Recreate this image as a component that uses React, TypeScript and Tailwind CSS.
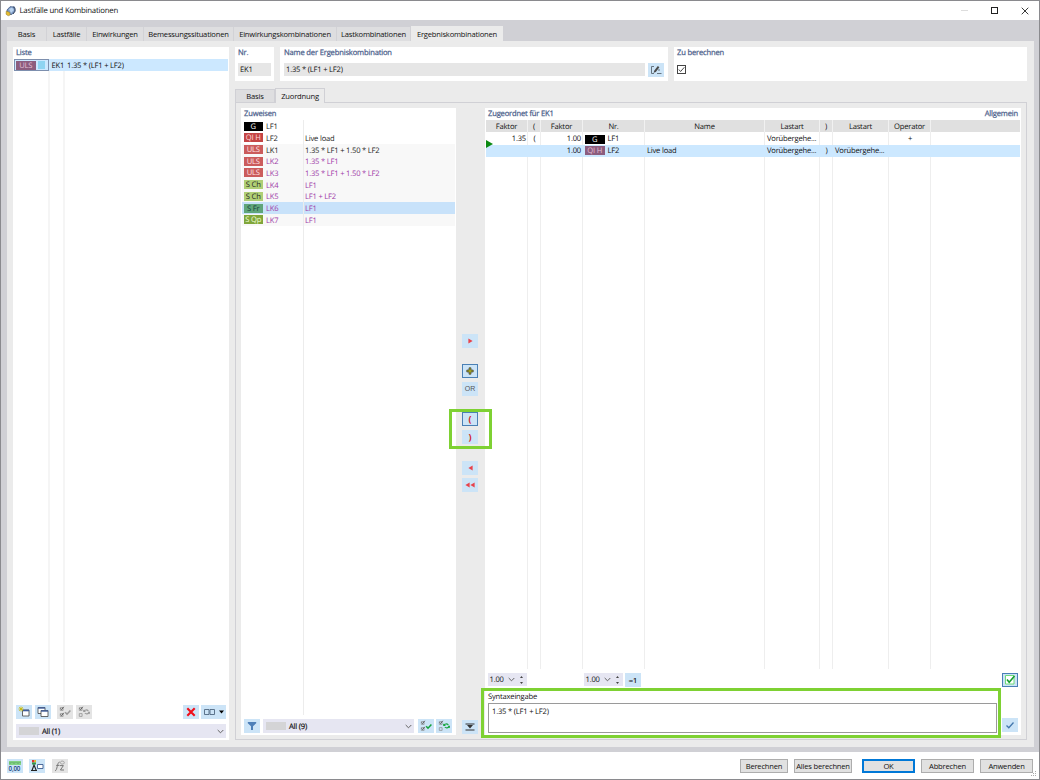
import React from 'react';
import clsx from 'clsx';

interface Assignment {
  badge: string;
  badgeClass: string;
  no: string;
  name: string;
  derived?: boolean;
  selected?: boolean;
}

const TABS = [
  { label: 'Basis', width: 'w-[40px]' },
  { label: 'Lastfälle', width: 'w-[40px]' },
  { label: 'Einwirkungen', width: 'w-[57px]' },
  { label: 'Bemessungssituationen', width: 'w-[90px]' },
  { label: 'Einwirkungskombinationen', width: 'w-[103px]' },
  { label: 'Lastkombinationen', width: 'w-[74px]' }
];

const ULS = 'bg-[#cb5c5c] text-[#ffe4e4]';
const S_CH = 'bg-[#b0cf76] text-[#222]';

const ASSIGNMENTS: Assignment[] = [
  { badge: 'G', badgeClass: 'bg-black text-white', no: 'LF1', name: '' },
  { badge: 'QI H', badgeClass: 'bg-[#c44646] text-[#ffd9d9]', no: 'LF2', name: 'Live load' },
  { badge: 'ULS', badgeClass: ULS, no: 'LK1', name: '1.35 * LF1 + 1.50 * LF2' },
  { badge: 'ULS', badgeClass: ULS, no: 'LK2', name: '1.35 * LF1', derived: true },
  { badge: 'ULS', badgeClass: ULS, no: 'LK3', name: '1.35 * LF1 + 1.50 * LF2', derived: true },
  { badge: 'S Ch', badgeClass: S_CH, no: 'LK4', name: 'LF1', derived: true },
  { badge: 'S Ch', badgeClass: S_CH, no: 'LK5', name: 'LF1 + LF2', derived: true },
  { badge: 'S Fr', badgeClass: 'bg-[#5fa57a] text-[#173f3c]', no: 'LK6', name: 'LF1', derived: true, selected: true },
  { badge: 'S Qp', badgeClass: 'bg-[#80a63b] text-[#f2ffd8]', no: 'LK7', name: 'LF1', derived: true }
];

const GRID = 'grid grid-cols-[42px_13px_42px_62px_120px_55px_13px_56px_42px_1fr]';

const HEADERS = ['Faktor', '(', 'Faktor', 'Nr.', 'Name', 'Lastart', ')', 'Lastart', 'Operator', ''];

const Panel: React.FC<{ className?: string; children?: React.ReactNode }> = ({ className, children }) => (
  <section className={clsx('shrink-0 bg-white', className)}>{children}</section>
);

const Title: React.FC<{ children: React.ReactNode }> = ({ children }) => (
  <h2 className="h-[12px] pl-[3px] leading-[13px] tracking-[-0.17px] text-[#4d5f8c] [-webkit-text-stroke:0.25px_#4d5f8c]">{children}</h2>
);

const IconButton: React.FC<{
  className?: string;
  variant?: 'normal' | 'disabled' | 'active';
  children: React.ReactNode;
}> = ({ className, variant = 'normal', children }) => (
  <button
    type="button"
    className={clsx(
      'flex h-[14px] w-[16px] shrink-0 items-center justify-center',
      variant === 'disabled' ? 'bg-[#e4e4e4]' : 'bg-[#cce4f7]',
      variant === 'active' && 'border border-[#4a80b5]',
      className
    )}
  >
    {children}
  </button>
);

const Icon: React.FC<{ children: React.ReactNode; w?: number; h?: number }> = ({ children, w = 12, h = 12 }) => (
  <svg width={w} height={h} viewBox={`0 0 ${w} ${h}`} fill="none" className="shrink-0" aria-hidden="true">
    {children}
  </svg>
);

const Chevron = () => (
  <Icon w={7} h={5}>
    <path d="M.7 1l2.8 2.8L6.3 1" stroke="#555" strokeWidth=".9" />
  </Icon>
);

const ChecksIcon: React.FC<{ color: string; invert?: boolean }> = ({ color, invert }) => (
  <Icon>
    <path d="M1.3 1.6h2.8v2.8H1.3zM1.3 7.6h2.8v2.8H1.3z" stroke="#8a8a8a" strokeWidth=".7" />
    <path d="M1.6 2.4l1 1.2L4.8.8" stroke="#555" strokeWidth=".9" />
    {invert ? (
      <>
        <path d="M6 5C7 3.6 9 3.6 10.4 4.8M11.2 6.6C10 8.2 8 8.2 6.8 7.2" stroke={color} strokeWidth="1.1" />
        <path d="M5.2 3.4v2.6H8zM11.9 8.2V5.8H9.4z" fill={color} />
      </>
    ) : (
      <>
        <path d="M1.6 8.4l1 1.2 2.2-2.8" stroke="#555" strokeWidth=".9" />
        <path d="M6.2 6.2l1.8 2 3.4-3.8" stroke={color} strokeWidth="1.5" />
      </>
    )}
  </Icon>
);

const Combo: React.FC<{ label: string; className?: string }> = ({ label, className }) => (
  <div className={clsx('flex h-[14px] items-center bg-[#e6e6f2] pr-[2px] pl-[3px]', className)}>
    <span className="h-[8px] w-[20px] bg-[#d4d4d6]" />
    <span className="ml-[3px] flex-1 pt-px [-webkit-text-stroke:0.2px_#222]">{label}</span>
    <Chevron />
  </div>
);

const Spinner = () => (
  <div className="flex h-[13px] w-[39px] shrink-0 items-center bg-[#e6e6f2] pl-[1.5px]">
    <span className="w-[18px] pt-px">1.00</span>
    <Chevron />
    <span className="ml-[4px]">
      <Icon w={5} h={10}>
        <path d="M1 3l1.5-2L4 3zM1 7l1.5 2L4 7z" fill="#444" />
      </Icon>
    </span>
  </div>
);

const Badge: React.FC<{ className: string; children: React.ReactNode }> = ({ className, children }) => (
  <span className={clsx('block h-[9px] w-[19.5px] shrink-0 text-center leading-[10px]', className)}>{children}</span>
);

const TitleBar = () => (
  <header className="flex h-[19px] shrink-0 items-center bg-white pl-[4px]">
    <Icon>
      <path d="M2 5l3-3.3 4.5.2L10 6 6.8 9.5H2.5z" fill="#7d9ac4" stroke="#344e7c" strokeWidth=".7" />
      <path d="M4 4l3-1.5L9 5 6 8z" fill="#b9d3ef" />
      <path d="M8 1.8l2 1.5v3L8.2 9" stroke="#40506a" strokeWidth="1" />
      <path d="M1.3 6l3.5 1.5.4 2.5-2 .8L1 9.2z" fill="#e6bd31" stroke="#8a742d" strokeWidth=".5" />
    </Icon>
    <h1 className="ml-[2.5px] flex-1 text-[7.8px] tracking-[-0.22px] text-[#111]">Lastfälle und Kombinationen</h1>
    <div className="flex items-center gap-[23px] pr-[10px]">
      <span className="h-px w-[7px] bg-[#ddd]" />
      <span className="size-[7px] border border-[#222]" />
      <Icon w={8} h={8}>
        <path d="M.7.7l6.6 6.6M7.3.7L.7 7.3" stroke="#222" strokeWidth=".9" />
      </Icon>
    </div>
  </header>
);

const MainTabs = () => (
  <nav className="flex h-[15px] shrink-0 items-end">
    {TABS.map((tab) => (
      <button
        key={tab.label}
        type="button"
        className={clsx('h-[14px] shrink-0 border-r border-[#d2d2d6] bg-[#dedee0] text-center leading-[14px]', tab.width)}
      >
        {tab.label}
      </button>
    ))}
    <button type="button" className="h-[15px] w-[92px] bg-[#ebebeb] pt-px text-center leading-[14px]">
      Ergebniskombinationen
    </button>
  </nav>
);

const ListPanel = () => (
  <Panel className="flex h-[693px] w-[216px] flex-col">
    <Title>Liste</Title>
    <div className="mx-px flex h-[12px] shrink-0 items-center bg-[#cce8ff]">
      <span className="flex h-[12px] w-[35px] shrink-0 items-center border border-[#7d8fae] pl-px">
        <Badge className="bg-[#8c5d7e] text-[#e3bfd6]">ULS</Badge>
        <span className="ml-[2px] h-[8px] w-[7px] bg-[#8ed4f2]" />
      </span>
      <span className="ml-[2.5px] w-[15.5px] pt-px">EK1</span>
      <span className="pt-px">1.35 * (LF1 + LF2)</span>
    </div>
    <div className="flex flex-1 pl-[35px]">
      <span className="h-[631px] w-[17px] border-x-2 border-[#f5f5f5]" />
    </div>
    <div className="flex items-center gap-[2.5px] px-[3px]">
      <IconButton>
        <Icon>
          <path d="M4.5 4h6.5v6h-6.5z" fill="#fff" stroke="#444" strokeWidth=".8" />
          <path d="M4.5 4.5h6.5" stroke="#405e9c" strokeWidth="1.6" />
          <path d="M3 .5v5M.5 3h5M1.2 1.2l3.6 3.6M4.8 1.2L1.2 4.8" stroke="#c9b900" strokeWidth=".8" />
        </Icon>
      </IconButton>
      <IconButton>
        <Icon>
          <path d="M1 1.5h7v6H1z" fill="#fff" stroke="#444" strokeWidth=".8" />
          <path d="M1 2h7" stroke="#405e9c" strokeWidth="1.4" />
          <path d="M4 4.5h7v6H4z" fill="#fff" stroke="#444" strokeWidth=".8" />
          <path d="M4 5h7" stroke="#405e9c" strokeWidth="1.4" />
        </Icon>
      </IconButton>
      <IconButton variant="disabled" className="ml-[4px]">
        <ChecksIcon color="#999" />
      </IconButton>
      <IconButton variant="disabled">
        <ChecksIcon color="#999" invert />
      </IconButton>
      <span className="flex-1" />
      <IconButton>
        <Icon w={10} h={10}>
          <path d="M1.3 1.3l7.4 7.4M8.7 1.3L1.3 8.7" stroke="#f00f1a" strokeWidth="2.1" />
        </Icon>
      </IconButton>
      <IconButton className="w-[25px] gap-[4px]">
        <Icon w={11} h={6}>
          <path d="M.5.5h4.5v5H.5zM6 .5h4.5v5H6z" stroke="#4f6680" strokeWidth=".9" />
        </Icon>
        <Icon w={5} h={4}>
          <path d="M0 .5h5L2.5 3.5z" fill="#000" />
        </Icon>
      </IconButton>
    </div>
    <Combo label="All (1)" className="mx-[3px] mt-[5px] mb-[2px]" />
  </Panel>
);

const CombinationHeader = () => (
  <div className="flex h-[34px] shrink-0 gap-[6px]">
    <Panel className="w-[39px]">
      <Title>Nr.</Title>
      <div className="mx-[3px] mt-[4px] h-[13px] bg-[#e6e6e6] pl-[2px] leading-[15px]">EK1</div>
    </Panel>
    <Panel className="w-[388px] pl-px">
      <Title>Name der Ergebniskombination</Title>
      <div className="mt-[4px] flex gap-[3px] pl-[3px]">
        <div className="h-[13px] w-[361px] bg-[#e6e6e6] pl-[2px] leading-[15px]">1.35 * (LF1 + LF2)</div>
        <IconButton>
          <Icon>
            <path d="M4 2.5H1.5v7H4M7 9.5h4.5M9 5v2" stroke="#5a6672" strokeWidth=".9" />
            <path d="M3.6 8.8l.6-2L7.8 2l1.6 1.2-3.6 4.8z" fill="#4a4a4a" />
          </Icon>
        </IconButton>
      </div>
    </Panel>
    <Panel className="w-[353px]">
      <Title>Zu berechnen</Title>
      <span className="mt-[6px] ml-[3px] flex size-[9px] items-center justify-center border border-[#444]">
        <Icon w={7} h={7}>
          <path d="M.8 3.5l1.8 2L6.3 1.3" stroke="#333" strokeWidth=".9" />
        </Icon>
      </span>
    </Panel>
  </div>
);

const AssignPanel = () => (
  <Panel className="flex w-[215px] flex-col">
    <Title>Zuweisen</Title>
    <div className="relative flex-1 pt-[.4px]">
      {ASSIGNMENTS.map((row, i) => (
        <div
          key={row.no}
          className={clsx(
            'mx-px flex h-[11.7px] items-center pl-[1.5px]',
            row.selected ? 'bg-[#c8e2fa]' : i > 1 && 'bg-[#f8f8f8]',
            row.derived ? 'text-[#a03aa8]' : 'text-[#1c1c1c]'
          )}
        >
          <Badge className={row.badgeClass}>{row.badge}</Badge>
          <span className="ml-[3px] w-[39px] pt-[2px]">{row.no}</span>
          <span className="pt-[2px]">{row.name}</span>
        </div>
      ))}
      <span className="absolute top-0 left-[62px] h-[595px] w-px bg-[#ececec]" />
    </div>
    <div className="mb-[2px] flex items-center px-[3px]">
      <IconButton>
        <Icon w={10} h={10}>
          <path d="M.8 1h8.4v1.2L6 5.2V9H4V5.2L.8 2.2z" fill="#4d7fb8" />
        </Icon>
      </IconButton>
      <Combo label="All (9)" className="ml-[3px] w-[151px]" />
      <IconButton className="ml-[4px]">
        <ChecksIcon color="#14a43c" />
      </IconButton>
      <IconButton className="ml-[2px]">
        <ChecksIcon color="#14a43c" invert />
      </IconButton>
    </div>
  </Panel>
);

const Arrow: React.FC<{ left?: boolean }> = ({ left }) => (
  <Icon w={5} h={6}>
    <path d={left ? 'M4.6.6v4.8L.4 3z' : 'M.4.6v4.8L4.6 3z'} fill="#e8434c" />
  </Icon>
);

const TransferColumn = () => (
  <div className="flex w-[29px] shrink-0 flex-col items-center pt-[226px] pr-px">
    <IconButton>
      <Arrow />
    </IconButton>
    <IconButton variant="active" className="mt-[16px]">
      <Icon w={8} h={8}>
        <path d="M3 .8h2V3h2.2v2H5v2.2H3V5H.8V3H3z" fill="#a0a020" stroke="#444" strokeWidth=".7" />
      </Icon>
    </IconButton>
    <IconButton className="mt-[4px] text-[#555]">
      <span className="font-['Liberation_Sans'] text-[7px] tracking-normal">OR</span>
    </IconButton>
    <IconButton variant="active" className="mt-[16px]">
      <span className="text-[9px] font-bold text-[#d11c24]">(</span>
    </IconButton>
    <IconButton className="mt-[4px]">
      <span className="text-[9px] font-bold text-[#d11c24]">)</span>
    </IconButton>
    <IconButton className="mt-[17px]">
      <Arrow left />
    </IconButton>
    <IconButton className="mt-[3px]">
      <Arrow left />
      <Arrow left />
    </IconButton>
    <IconButton className="mt-auto mb-px">
      <Icon w={10} h={8}>
        <path d="M.5 1h9M.5 7h9" stroke="#333" strokeWidth="1" />
        <path d="M2 2h6L5 5.6z" fill="#333" />
      </Icon>
    </IconButton>
  </div>
);

const AssignedPanel = () => (
  <Panel className="flex w-[536px] flex-col">
    <div className="flex justify-between pr-[3px]">
      <Title>Zugeordnet für EK1</Title>
      <Title>Allgemein</Title>
    </div>
    <div className="relative mx-px h-[549px]">
      <div className={clsx(GRID, 'absolute inset-0')}>
        {HEADERS.map((_, i) => (
          <span key={i} className={clsx(i < HEADERS.length - 1 && 'border-r border-[#eeeeee]')} />
        ))}
      </div>
      <div className={clsx(GRID, 'relative h-[12px] bg-[#e0e0e0] text-center leading-[14px]')}>
        {HEADERS.map((header, i) => (
          <span key={i} className={clsx('h-[12px]', i < HEADERS.length - 1 && 'border-r border-[#f1f1f1]')}>
            {header}
          </span>
        ))}
      </div>
      <div className={clsx(GRID, 'relative h-[12px] items-center pt-px leading-[12px]')}>
        <span className="pr-[2px] text-right">1.35</span>
        <span className="text-center">(</span>
        <span className="pr-[2px] text-right">1.00</span>
        <span className="flex items-center gap-[3px] pl-[2px]">
          <Badge className="bg-black text-white">G</Badge>
          <span>LF1</span>
        </span>
        <span />
        <span className="pl-[2px]">Vorübergehe...</span>
        <span />
        <span />
        <span className="text-center">+</span>
      </div>
      <div className={clsx(GRID, 'relative mt-[.5px] h-[12px] items-center bg-[#cce8ff] leading-[12px]')}>
        <span />
        <span />
        <span className="pr-[2px] text-right">1.00</span>
        <span className="flex items-center gap-[3px] pl-[2px]">
          <Badge className="bg-[#8c5d7e] text-[#e3bfd6]">QI H</Badge>
          <span>LF2</span>
        </span>
        <span className="pl-[2px]">Live load</span>
        <span className="pl-[2px]">Vorübergehe...</span>
        <span className="text-center">)</span>
        <span className="pl-[2px]">Vorübergehe...</span>
      </div>
      <svg className="absolute top-[20px] left-0" width="7" height="8" aria-hidden="true">
        <path d="M0 0l7 4-7 4z" fill="#0c8a12" />
      </svg>
    </div>
    <div className="mt-[3px] flex h-[15px] items-center px-[3px]">
      <Spinner />
      <span className="w-[57px]" />
      <Spinner />
      <IconButton className="ml-[2px] [-webkit-text-stroke:0.2px_#222]">=1</IconButton>
      <span className="flex-1" />
      <IconButton variant="active">
        <Icon>
          <path d="M1.5 1.5h8.5v8.5H1.5z" fill="#fff" stroke="#6fdc7a" />
          <path d="M3 5.5l2.2 2.8L10.5 2" stroke="#169c32" strokeWidth="1.6" />
        </Icon>
      </IconButton>
    </div>
    <div className="mt-[3px] flex items-end gap-[5px] pl-[3px]">
      <div className="w-[509px]">
        <p className="h-[13px] leading-[14px]">Syntaxeingabe</p>
        <div className="h-[30px] border border-[#9a9a9a] pt-[3px] pl-[3px]">1.35 * (LF1 + LF2)</div>
      </div>
      <IconButton className="mb-px">
        <Icon w={10} h={10}>
          <path d="M1.5 5.5l2.3 2.2L8.5 2.5" stroke="#4377ad" strokeWidth="1.3" />
        </Icon>
      </IconButton>
    </div>
  </Panel>
);

const FooterButton: React.FC<{ className: string; children: string }> = ({ className, children }) => (
  <button type="button" className={clsx('h-[14px] shrink-0 bg-[#e1e1e1] text-center', className)}>
    {children}
  </button>
);

const Footer = () => (
  <footer className="flex h-[27px] shrink-0 items-center bg-white pl-[5.5px]">
    <div className="flex gap-[6.5px]">
      <IconButton>
        <Icon w={14} h={12}>
          <path d="M1 1h12v4H1z" fill="#82d382" />
          <path d="M2 2v2M4 2v1M6 2v2M8 2v1M10 2v2M12 2v1" stroke="#3e7a4a" strokeWidth=".5" />
          <text x="0.6" y="10.8" fontSize="6.2" fontWeight="600" fill="#234a80">
            0,00
          </text>
        </Icon>
      </IconButton>
      <IconButton>
        <Icon w={14} h={12}>
          <path d="M2 0h2.5v2.5H2z" fill="#e03232" />
          <path d="M4.5 0H6v2.5H4.5z" fill="#e3c020" />
          <path d="M2 2.5h4v2H2z" fill="#2d9d50" />
          <path d="M2 10.5L4 5l2.3 5.5M1 10.5h6" stroke="#222" strokeWidth="1.1" />
          <path d="M7.5 4.5H13v4H7.5z" fill="#fff" stroke="#3d5c91" strokeWidth=".9" />
        </Icon>
      </IconButton>
      <IconButton variant="disabled">
        <Icon>
          <path d="M1 10.8c2.4 0 2-8.6 4.6-8.8M2.2 5.4h3.3M6 5.6h3.4L6.4 10h3.6" stroke="#777" strokeWidth="1" />
          <path d="M6.3 2.6c0-2 4-2 4 0s-4 2-4 0z" stroke="#999" strokeWidth=".9" />
        </Icon>
      </IconButton>
    </div>
    <div className="ml-auto flex gap-[6px] pr-[6px]">
      <FooterButton className="w-[48px] border border-[#adadad] leading-[13px]">Berechnen</FooterButton>
      <FooterButton className="w-[58px] border border-[#adadad] leading-[13px]">Alles berechnen</FooterButton>
      <FooterButton className="ml-[4px] w-[53px] border-2 border-[#0078d7] leading-[11px]">OK</FooterButton>
      <FooterButton className="w-[53px] border border-[#adadad] leading-[13px]">Abbrechen</FooterButton>
      <FooterButton className="w-[53px] border border-[#adadad] leading-[13px]">Anwenden</FooterButton>
    </div>
    <svg className="absolute right-[2px] bottom-[2px]" width="6" height="6" aria-hidden="true">
      <path d="M4 0h1v1H4zM2 2h1v1H2zM4 2h1v1H4zM0 4h1v1H0zM2 4h1v1H2zM4 4h1v1H4z" fill="#aaa" />
    </svg>
  </footer>
);

export default function App() {
  return (
    <div className="relative flex h-[780px] w-[1040px] flex-col overflow-hidden border border-[#8a8a8e] bg-[#d0d0d5] font-['Open_Sans','Noto_Sans',sans-serif] text-[7.6px] leading-[10px] tracking-[-0.2px] whitespace-nowrap text-[#111] [text-rendering:geometricPrecision]">
      <TitleBar />
      <div className="flex h-[732px] shrink-0 flex-col px-[6px] pt-[6px] pb-[5px]">
        <MainTabs />
        <main className="flex w-[1027px] flex-1 gap-[6px] bg-[#ebebeb] p-[6px] pb-[7px]">
          <ListPanel />
          <div className="flex w-[792px] flex-col">
            <CombinationHeader />
            <nav className="relative z-10 mt-[7px] flex h-[15px] shrink-0 items-end">
              <button type="button" className="h-[14px] w-[40px] border border-[#d0d0d5] bg-[#dedee0] text-center leading-[12px]">
                Basis
              </button>
              <button type="button" className="h-[15px] w-[50px] border border-b-0 border-[#d0d0d5] bg-[#ebebeb] text-center leading-[15px]">
                Zuordnung
              </button>
            </nav>
            <div className="-mt-px flex flex-1 border border-[#d0d0d5] px-[5px] pt-[5px] pb-[4px]">
              <AssignPanel />
              <TransferColumn />
              <AssignedPanel />
            </div>
          </div>
        </main>
      </div>
      <Footer />
      <div className="absolute top-[408px] left-[448px] h-[40px] w-[43px] border-[3px] border-[#7ed133]" />
      <div className="absolute top-[687px] left-[480px] h-[50px] w-[520px] border-[3px] border-[#7ed133]" />
    </div>
  );
}
